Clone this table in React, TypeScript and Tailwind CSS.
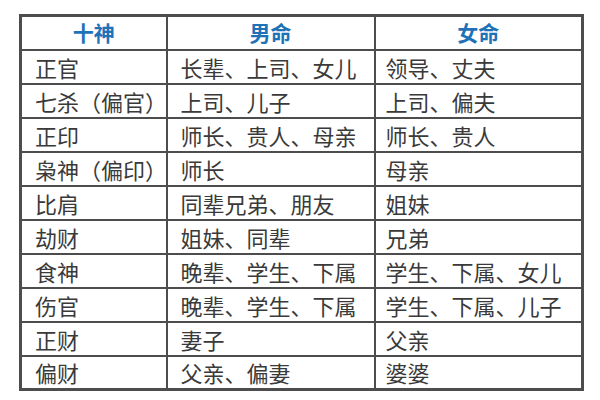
import React from 'react';

const rows: [string, string, string][] = [
    ['正官', '长辈、上司、女儿', '领导、丈夫'],
    ['七杀（偏官）', '上司、儿子', '上司、偏夫'],
    ['正印', '师长、贵人、母亲', '师长、贵人'],
    ['枭神（偏印）', '师长', '母亲'],
    ['比肩', '同辈兄弟、朋友', '姐妹'],
    ['劫财', '姐妹、同辈', '兄弟'],
    ['食神', '晚辈、学生、下属', '学生、下属、女儿'],
    ['伤官', '晚辈、学生、下属', '学生、下属、儿子'],
    ['正财', '妻子', '父亲'],
    ['偏财', '父亲、偏妻', '婆婆'],
];

const font = { fontFamily: '"Noto Sans CJK SC", "Liberation Sans", sans-serif' };

const App: React.FC = () => {
    return (
        <div className="w-[600px] h-[400px] bg-white pl-[19px] pt-[14px]" style={font}>
            <table className="w-[562px] border-collapse border-[3px] border-[#4d4d4d] table-fixed">
                <colgroup>
                    <col className="w-[146px]" />
                    <col className="w-[208px]" />
                    <col className="w-[208px]" />
                </colgroup>
                <thead>
                    <tr className="h-[34px]">
                        {['十神', '男命', '女命'].map((h) => (
                            <th key={h} className="border-2 border-[#4d4d4d] p-0 text-center text-[21px] font-bold text-[#1e72b8] leading-none">
                                {h}
                            </th>
                        ))}
                    </tr>
                </thead>
                <tbody>
                    {rows.map((r, i) => (
                        <tr key={i} className="h-[34px]">
                            {r.map((c, j) => (
                                <td
                                    key={j}
                                    className={`border-2 border-[#4d4d4d] py-0 text-[22px] leading-none text-[#3a3a3a] whitespace-nowrap ${j === 2 ? 'pl-[10px]' : 'pl-[13px]'}`}
                                >
                                    {c}
                                </td>
                            ))}
                        </tr>
                    ))}
                </tbody>
            </table>
        </div>
    );
};

export default App;
